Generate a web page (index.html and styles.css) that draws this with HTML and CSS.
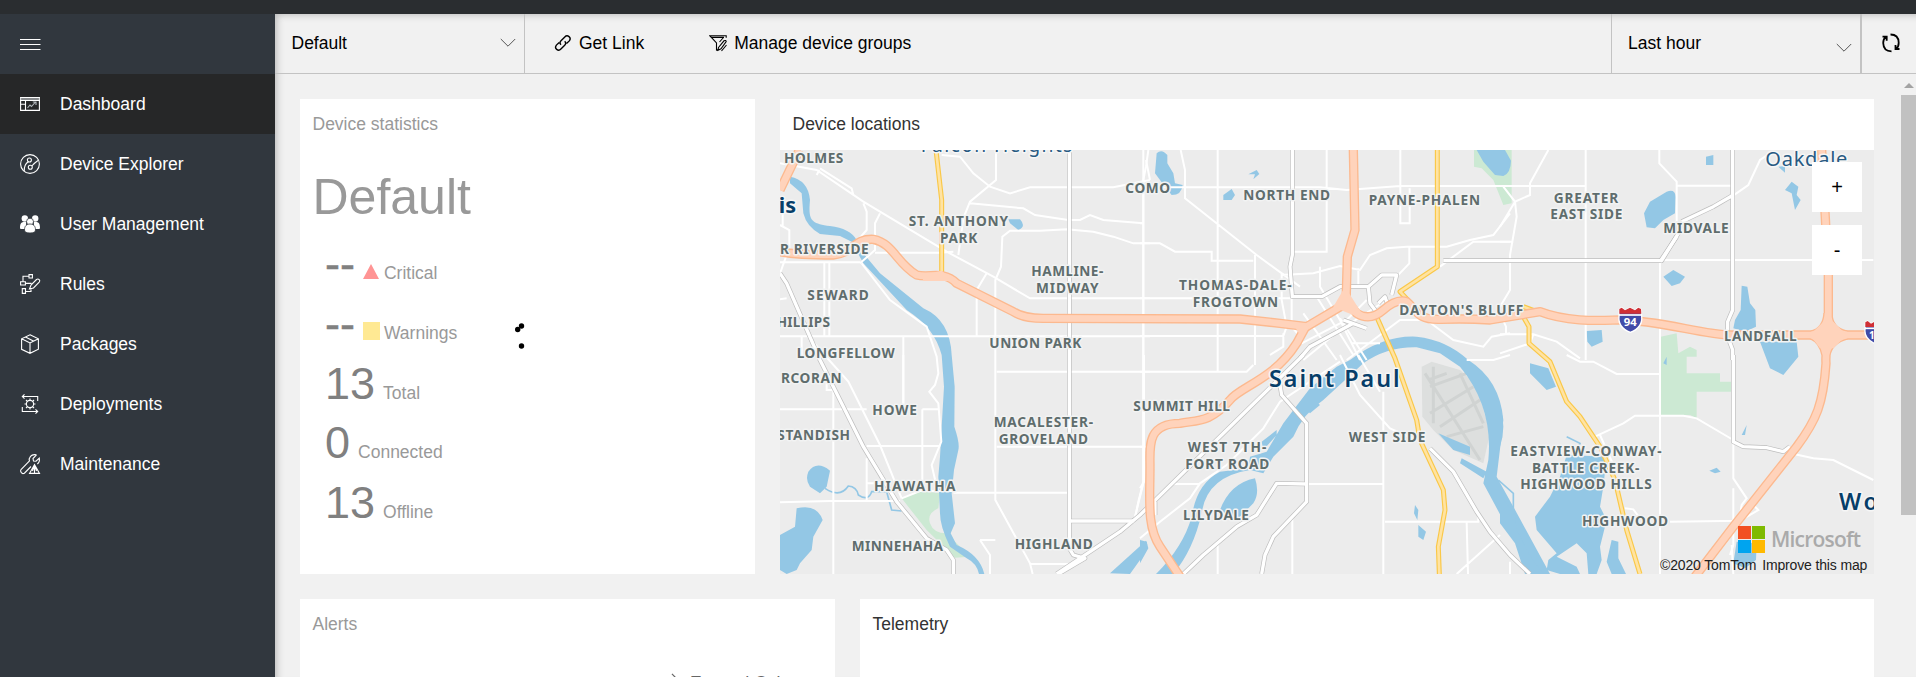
FILE: index.html
```html
<!DOCTYPE html>
<html lang="en">
<head>
<meta charset="utf-8">
<title>Dashboard</title>
<link rel="stylesheet" href="styles.css">
</head>
<body>
<div class="topbar"></div>
<div class="app">
  <nav class="sidebar">
    <div class="nav-item"><svg class="icon" viewBox="0 0 20 20"><path d="M0 5.5h20.5M0 10.5h20.5M0 15.5h20.5"/></svg></div>
    <a class="nav-item active"><svg class="icon" viewBox="0 0 20 20"><path d="M.6 3.6h18.8v12.8H.6zM0 6.4h20M5.5 6.4v10M0 10.3h5.5"/><path class="soft" d="M0 5h20M7.5 14l2.5-3 1.5 1.5 4-4.5M12.8 8H16v3"/></svg><span>Dashboard</span></a>
    <a class="nav-item"><svg class="icon" viewBox="0 0 20 20"><circle cx="10" cy="10" r="9.4"/><circle cx="9.4" cy="6" r="2"/><circle cx="10.3" cy="13.3" r="2"/><path d="M8.300 7.800C5.500 9.500 4.200 12 4.200 17M11.800 12C14 9.500 15 8.500 18 6.500"/></svg><span>Device Explorer</span></a>
    <a class="nav-item"><svg class="icon solid" viewBox="0 0 20 20"><circle cx="4.800" cy="4.500" r="3.200"/><circle cx="15.200" cy="4.500" r="3.200"/><path d="M0 14c0-4 1-6 4-6h2v7H1Q0 15 0 14zM20 14c0-4-1-6-4-6h-2v7h5q1 0 1-1z"/><g class="cut"><circle cx="10" cy="7.700" r="3.500"/><path d="M4.500 16c0-4 2-6 5.500-6s5.500 2 5.500 6q0 3-5.500 3t-5.500-3z"/></g></svg><span>User Management</span></a>
    <a class="nav-item"><svg class="icon" viewBox="0 0 20 20"><path d="M9 .6h3.400V4H9zM.6 7.800h4.800v3.200H.6zM2.300 14.600h3.200v4.800H2.300zM3 7.500V2.300h6M5.500 9.400h6M5.500 17.500H11v-2M9.500 15l1.500-4 5.500-5.500q1.500-1 2.700.2t0 2.500L13.500 14z"/></svg><span>Rules</span></a>
    <a class="nav-item"><svg class="icon" viewBox="0 0 20 20"><path d="M10 .8l8.400 4v10.400L10 19.300l-8.400-4V4.800zM1.600 4.800L10 9l8.400-4.200M10 9v10M5.500 3l8.300 4.200"/></svg><span>Packages</span></a>
    <a class="nav-item"><svg class="icon" viewBox="0 0 20 20"><circle cx="10" cy="10" r="3.600"/><path d="M10 4.500v2M10 13.500v2M4.500 10h2M13.500 10h2M6 6l1.500 1.500M14 6l-1.500 1.500M6 14l1.500-1.500M14 14l-1.500-1.500M4.500.3L2.300 2.500l2.200 2.200M2.500 2.500h15.200V7M15.500 15.300l2.200 2.200-2.200 2.200M17.500 17.500H2.300V13"/></svg><span>Deployments</span></a>
    <a class="nav-item"><svg class="icon" viewBox="0 0 20 20"><path d="M16.500.9q-4-1-6 1.500t-1 4.600L1 15.500q-1 1.300.2 3t3.200.7L11 12.500M16.500.9L13 4.500l.5 2.500 2.500.2L19.300 4q.8 4-2 6M9.500 19.400l5-8.900 5 8.900zM14.500 11v8M12.500 17l1.500-4.500M16.500 17L15 12.500"/></svg><span>Maintenance</span></a>
  </nav>
  <main class="main">
    <header class="toolbar">
      <div class="select group-select"><span>Default</span><svg class="chev" viewBox="0 0 16 10"><path d="M.8 1L8 8.200 15.200 1"/></svg></div>
      <button class="tool link"><svg class="glyph" viewBox="0 0 18 18"><path d="M7 10.800q-2-2 0-4l3.800-3.900q2-2 4.200-.3t.3 4.300L12.500 9.500M10.700 7.200q2 2 0 4l-3.800 3.900q-2 2-4.200.3t-.3-4.300L5.200 8.500"/></svg><span>Get Link</span></button>
      <button class="tool groups"><svg class="glyph thin" viewBox="0 0 18 18"><path d="M7.500 16.500V9L.8 1.700h16.400v2M2 3.400h13M10.500 8l4-4.500M7.500 16.500l2-1.200M9.500 13.500L15 6.800q2-1 2.200.8L12 14.800l-3 1.500zM12.500 17l5-6"/></svg><span>Manage device groups</span></button>
      <div class="select time-select"><span>Last hour</span><svg class="chev low" viewBox="0 0 16 10"><path d="M.8 1L8 8.200 15.200 1"/></svg></div>
      <button class="refresh"><svg viewBox="0 0 20 20"><path d="M9.500 1.500q8 0 8.200 8.200 0 4-2.500 6M18.500 16h-4v-4M10.500 18.300q-8 0-8.300-8.300 0-4 2.600-6M1.500 3.600h4.200v4.200"/></svg></button>
    </header>
    <div class="content">
      <div class="row first">
        <section class="card stats">
          <h2 class="muted">Device statistics</h2>
          <div class="group-name">Default</div>
          <div class="stat"><b class="empty">--</b><svg class="tri" viewBox="0 0 16 15"><path d="M8 0l8 15H0z"/></svg><span>Critical</span></div>
          <div class="stat"><b class="empty">--</b><i class="square"></i><span>Warnings</span></div>
          <div class="stat num"><b>13</b><span>Total</span></div>
          <div class="stat num"><b>0</b><span>Connected</span></div>
          <div class="stat num"><b>13</b><span>Offline</span></div>
          <svg class="spinner" viewBox="0 0 12 28"><circle cx="8.500" cy="4" r="2.700"/><circle cx="4.700" cy="7.500" r="2.700"/><circle cx="8.500" cy="24" r="2.700"/></svg>
        </section>
        <section class="card locations">
          <h2>Device locations</h2>
          <div class="map">
            <svg class="map-art" viewBox="0 30 3282 1272" preserveAspectRatio="none">
              <defs>
                <g id="streets">
                  <g>
                    <path d="M0 70L110 90 250 185 500 335 640 410 750 475H1110M120 85L215 145 220 165M110 105L118 90M250 190L260 215V270L225 310M300 220L285 250V330L240 370M0 367H240M0 255L28 270V330M133 367V590M148 367V590M0 589H1110M8 210V260M65 592V645M18 350L0 400M0 478L20 475M370 592V800M285 338H480L520 335"/>
                    <path d="M485 45L540 50 580 100 630 140 690 160 750 142H1000L1110 120M648 30V120L570 185 550 235 535 345M570 190L730 205 765 225 865 240 900 240 930 225 970 240 1090 250M1110 310H1060L1000 290 940 275 860 268 780 272H690L667 290 663 380 646 420V1080L750 1270 758 1302M620 400L590 450V589M1090 30V1030L1060 1150M1098 60L1110 120M245 370L330 480 440 560 470 650 475 700 465 735 448 755 475 790 484 905 455 975 470 1040"/>
                  </g>
                  <g transform="translate(1080 0)">
                    <path d="M25 30L18 80 10 120V645M122 30L135 90V175L350 345 480 440M233 30V645M0 142H540L620 150 780 138H1110M560 30V335H460M0 310H60L105 335H215V362H340M345 345V645M0 475H450M0 588H430L440 560 425 480V405L520 400 600 378 660 390 690 345 740 325 800 320H920L990 300 1060 285 1110 220M540 380V440L600 540 660 660M455 470V560L480 590M781 30V250H809V145M808 320V370L770 410M900 380L1000 305H1110M655 385V440M530 470L640 645M490 520L590 660M0 250L12 250M430 580V620L390 645"/>
                    <path d="M485 610L620 540 680 480M490 660L600 570 740 480M600 535L680 660M620 660L780 540 860 540 940 600 1030 620 1055 590 1110 580M635 610H720"/>
                  </g>
                  <g transform="translate(2160 0)">
                    <path d="M257 30V660M0 138H257M145 30L90 130V165L45 185 10 140M45 185L0 260M45 185L50 230 30 345V450L0 500M0 305H40M478 30V70L530 125V290M530 137H700M810 40L780 60 745 135 695 170M480 360H1120M480 360V1302M0 583H100L170 605 240 655M100 583L90 610 0 640M0 520L18 560V583"/>
                  </g>
                  <g transform="translate(0 645)">
                    <path d="M160 100V657M0 163H260M0 442L150 438H360M140 80V105H158M80 -60L205 80 300 270 365 430M370 0V150M260 273H480M260 310V435M427 163V400M427 163H475M260 385H300M520 413H865M650 50H1110M650 275H1090M750 627H865M600 555H646M600 555L630 600V657M1090 0V380L1075 440 1065 490M365 430L420 408H520"/>
                  </g>
                  <g transform="translate(1080 645)">
                    <path d="M0 50H320L340 30M345 0V30M233 0V50M12 0V380L0 400M0 275H40M100 387H180M0 550L60 500 150 430 180 385 260 330 370 220 420 140 600 20M500 387H730M730 110V657M655 0L720 110M600 0L660 120 750 220 840 260M735 500H1015V470M980 503L984 657M457 490V657M233 560V657M950 657L1080 540M980 15H1060L1110 0"/>
                  </g>
                  <g transform="translate(2160 645)">
                    <path d="M200 0L240 20 280 20 350 57H480M285 245L370 205 405 182H550L590 190 700 255M700 260V370L740 430 725 450 720 480M700 400V570L690 600M850 290L940 310 1000 315 1120 375M510 500L720 497 775 465 745 435M375 460L400 463 420 490M30 620V657M695 570L700 657M300 240L340 330"/>
                  </g>
                </g>
                <g id="roads">
                  <path d="M868 30V1225L880 1245 915 1255 835 1302M868 1143H1060M0 400L20 430 120 660 250 920 350 1085 440 1195 500 1230 520 1260V1302"/>
                  <g transform="translate(1080 0)"><path d="M457 30V345L450 380 457 470H545L600 440H685L725 405H770L755 465M685 440L690 490 720 530M715 490L735 470 745 500M910 362H1565L1615 280 1615 245M480 655L510 620 640 550M610 540L680 565"/></g>
                  <g transform="translate(2160 0)"><path d="M698 30V510L683 545V590L698 630V660M545 245L640 200 700 165M480 365L530 290"/></g>
                  <g transform="translate(1080 645)"><path d="M490 0L0 480-60 530-250 657M420 90L425 120 500 205V440L400 545 375 600 365 657M130 657L190 600 290 515 350 480 410 385 500 387M45 440V480M870 280L940 350 1010 470 1050 530 1110 600 1170 657"/></g>
                  <g transform="translate(2160 645)"><path d="M700 0V260L730 275 800 278 850 290 870 275"/></g>
                </g>
                <g id="yellow">
                  <path d="M468 30L485 180V400"/>
                  <g transform="translate(1080 0)"><path d="M892 30V380L780 455 860 540M712 535L765 655 830 840 840 900 910 1050 915 1110 895 1220 898 1302"/></g>
                  <g transform="translate(2160 0)"><path d="M70 500L110 515M70 530L87 560V610L150 665 200 785 240 830 300 920 345 1020 380 1170 420 1302"/></g>
                </g>
                <g id="highway">
                  <path d="M58 30L0 150M0 335Q50 345 160 345C220 340 220 295 280 298C340 310 350 370 410 405C450 415 490 390 530 430L700 515Q730 535 790 535L1380 537 1500 550 1580 560 1690 495"/>
                  <g transform="translate(1080 0)"><path d="M640 30L645 270 622 350 618 495M600 495Q630 490 650 520 690 545 730 510T800 485C830 510 830 540 900 538Q980 535 1050 540L1200 515C1290 550 1400 540 1440 540 1560 540 1700 588 1780 585H2210M500 555L470 610C400 720 300 740 270 780 210 850 170 840 120 850 20 850 30 920 30 980 30 1080 20 1160 60 1220L120 1310"/></g>
                  <g transform="translate(2160 0)"><path d="M965 30L985 400V560C985 610 975 630 978 670 970 790 950 840 890 920L700 1160 585 1310M935 585Q980 575 984 520M984 520Q985 575 1040 585M935 585Q970 600 978 645M1040 585Q985 600 978 645"/></g>
                </g>
              </defs>
              <path class="park" d="M365 1075L420 1053 480 1060 475 1105Q440 1120 450 1150T500 1180L570 1250 525 1253 440 1170z"/>
              <g transform="translate(2160 0)"><path class="park" d="M-78 30V80L-55 85-20 120 10 195 35 190V30zM482 590L530 580 535 640 570 620 590 630V650H560V700H660V725H693V755H590V835L570 825H482z"/></g>
              <path class="airport" d="M1925 680L1955 665 2040 690Q2080 720 2100 770L2130 880 2110 970 2020 930 1960 870 1927 830z"/>
              <path class="runway" d="M1935 700L2100 960M1950 740L2060 700M1950 820L2080 740M1960 680V850M1980 860L2100 780M2040 700L2110 850M1945 720L2000 700M2000 890L2110 860"/>
              <g class="water">
                <path d="M30 110Q85 120 90 180C85 240 90 250 150 258Q210 265 230 300L250 340 300 400 430 505Q510 540 515 645L524 740 523 860Q540 910 535 930L522 990 515 1060 525 1150 512 1180 530 1215Q600 1245 613 1302H597Q590 1270 560 1255L510 1220Q480 1160 480 1120L475 1010 480 950 485 860 492 740 485 645C470 590 440 550 380 510L250 370 215 305 180 288 120 282Q80 260 70 220L65 160 30 130zM685 238L720 238Q740 260 715 270L690 250z"/>
                <path d="M85 995Q110 960 150 992L140 1040 120 1060 90 1040Q75 1020 85 995zM50 1105Q110 1090 128 1140L100 1190 95 1230 60 1270 50 1290 20 1302 0 1290V1185L45 1160zM990 1300L1098 1202Q1110 1220 1080 1260L1050 1302z"/>
                <g transform="translate(1080 0)">
                  <path d="M50 40Q65 25 82 45V70L100 100 105 130 128 135Q125 165 95 165L75 140 45 100zM250 165L275 147 285 165 275 180H250zM325 103L350 90 358 102 340 118 345 103zM1010 30H1095L1113 62Q1112 100 1090 108L1065 105 1030 65z"/>
                  <path d="M630 660Q730 585 830 590 920 600 985 660 1080 720 1090 840 1080 930 1070 1010L1120 1100 1230 1302H1195L1100 1160 1030 1030 1045 960Q1060 800 960 680L900 640 830 622Q740 620 670 670L550 780Q490 820 460 890L400 950 370 1000 330 990Q200 1010 185 1120 160 1230 100 1302H48Q130 1220 155 1130 170 1030 240 995L325 985 330 950 380 935 430 850 510 745 590 680zM240 1110Q270 1030 345 1015 360 1060 340 1090L290 1140zM500 810L530 785 540 795 510 820zM0 1200L20 1205 25 1225 0 1270zM365 905L410 870V885L370 930zM825 1095L835 1110 832 1140 822 1120zM835 1155L858 1175 850 1200 835 1190zM895 880L930 895 990 920 990 945 940 930zM965 955L1040 995 1030 1015 960 970z"/>
                </g>
                <g transform="translate(2160 0)">
                  <path d="M618 50L640 45 640 75 618 75zM500 155Q525 145 527 170L525 220 490 240 465 265 440 262 432 220 450 185zM490 410L520 390 555 410 540 430 515 438zM855 150L875 125 895 140 890 165 902 180 885 210 875 160zM835 80L855 78 855 98zM725 437L742 440 750 490 766 510 768 560 735 575 700 565 705 540 722 510zM780 605H890L895 650 850 705 810 685zM260 573L305 570 308 605 275 620 262 605zM490 670L500 650V675z"/>
                  <path d="M90 670L145 685 168 740 140 750 90 700zM200 945L320 950 310 1040 300 1100 320 1140 300 1220 305 1260 290 1302H265L260 1240 230 1210 170 1250 230 1280 240 1302H180L140 1290 145 1260 170 1240 110 1170 105 1130 150 1070 180 1010zM0 1065L45 1125 50 1170 85 1240 130 1302H75L45 1210 0 1150zM335 1200L355 1205V1255L378 1302H335L320 1265zM628 992L650 983 662 995 645 1000zM725 885L740 855 735 885zM710 1205L770 1210 768 1260 735 1285 700 1270zM0 800Q20 860 0 920z"/>
                </g>
              </g>
              <path class="creek" d="M135 1045Q180 1075 205 1038 230 1040 235 1065 265 1085 275 1055L320 1055 335 1110 365 1113"/>
              <path class="creek" d="M2155 1020L2200 1060V1110M2360 890L2400 910 2380 960"/>
              <use href="#streets" class="street"/>
              <use href="#roads" class="road-case"/><use href="#roads" class="road"/>
              <use href="#yellow" class="yellow-case"/><use href="#yellow" class="yellow-road"/>
              <use href="#highway" class="hw-case"/><use href="#highway" class="hw"/>
              <path class="junction" d="M1660 500L1695 440 1720 480 1745 520 1720 525 1695 515zM1535 545L1590 560 1560 585zM3090 585L3130 545H3160L3200 585 3160 625H3120zM425 405L485 392 530 430 510 423H430z"/>
              <g class="shield" transform="translate(2515 503)"><path d="M3 5L10 0 20 8 35 0 50 8 60 0 68 5 70 25Q74 60 36 74-2 60 2 25z" fill="#414ba8" stroke="#fff" stroke-width="4"/><path d="M3 4L10 0 20 8 35 0 50 8 60 0 68 4 69 18H3z" fill="#cf2f35"/><path d="M2 22h68" stroke="#fff" stroke-width="5"/><text x="36" y="54" font-size="34" text-anchor="middle">94</text></g>
              <g class="shield" transform="translate(3253 543)"><path d="M3 5L10 0 20 8 35 0 50 8V74Q-2 60 2 25z" fill="#414ba8" stroke="#fff" stroke-width="4"/><path d="M3 4L10 0 20 8 35 0V18H3z" fill="#cf2f35"/><path d="M2 22h68" stroke="#fff" stroke-width="5"/><text x="14" y="54" font-size="30">1</text></g>
              <g class="places">
                <text x="12" y="70" textLength="178">HOLMES</text>
                <text x="0" y="342" textLength="266">R RIVERSIDE</text>
                <text x="386" y="258" textLength="298">ST. ANTHONY</text><text x="480" y="308" textLength="112">PARK</text>
                <text x="754" y="409" textLength="216">HAMLINE-</text><text x="768" y="459" textLength="188">MIDWAY</text>
                <text x="82" y="481" textLength="184">SEWARD</text><text x="-10" y="560" textLength="160">HILLIPS</text>
                <text x="50" y="653" textLength="294">LONGFELLOW</text><text x="628" y="624" textLength="276">UNION PARK</text>
                <text x="1036" y="160" textLength="134">COMO</text><text x="1390" y="180" textLength="260">NORTH END</text>
                <text x="1766" y="194" textLength="334">PAYNE-PHALEN</text>
                <text x="1197" y="451" textLength="338">THOMAS-DALE-</text><text x="1238" y="501" textLength="256">FROGTOWN</text>
                <text x="1858" y="525" textLength="372">DAYTON'S BLUFF</text>
                <text x="2321" y="188" textLength="194">GREATER</text><text x="2311" y="237" textLength="216">EAST SIDE</text>
                <text x="2650" y="279" textLength="196">MIDVALE</text><text x="2832" y="603" textLength="218">LANDFALL</text>
                <text x="3" y="728" textLength="182">RCORAN</text><text x="277" y="825" textLength="134">HOWE</text>
                <text x="-8" y="901" textLength="218">STANDISH</text><text x="282" y="1053" textLength="244">HIAWATHA</text>
                <text x="215" y="1232" textLength="274">MINNEHAHA</text><text x="704" y="1228" textLength="234">HIGHLAND</text>
                <text x="641" y="862" textLength="298">MACALESTER-</text><text x="656" y="911" textLength="268">GROVELAND</text>
                <text x="1060" y="814" textLength="290">SUMMIT HILL</text>
                <text x="1223" y="937" textLength="236">WEST 7TH-</text><text x="1216" y="986" textLength="252">FORT ROAD</text>
                <text x="1706" y="907" textLength="230">WEST SIDE</text><text x="1209" y="1141" textLength="198">LILYDALE</text>
                <text x="2191" y="949" textLength="454">EASTVIEW-CONWAY-</text><text x="2256" y="998" textLength="322">BATTLE CREEK-</text><text x="2221" y="1047" textLength="394">HIGHWOOD HILLS</text>
                <text x="2406" y="1159" textLength="258">HIGHWOOD</text>
              </g>
              <g class="cities">
                <text x="-4" y="218" textLength="52" font-size="65">is</text>
                <text class="metro" x="1467" y="740" textLength="392" font-size="70">Saint Paul</text>
                <text class="metro" x="3177" y="1110" font-size="70" letter-spacing="8">Wo</text>
                <text class="town" x="422" y="35" textLength="455" font-size="58">Falcon Heights</text>
                <text class="town" x="2956" y="79" textLength="246" font-size="60">Oakdale</text>
              </g>
            </svg>
            <div class="map-zoom"><button>+</button><button>-</button></div>
            <div class="map-brand"><i class="ms"><b></b><b></b><b></b><b></b></i><span>Microsoft</span></div>
            <div class="map-credit"><span>©2020 TomTom</span><span>Improve this map</span></div>
          </div>
        </section>
      </div>
      <div class="row second">
        <section class="card alerts"><h2 class="muted">Alerts</h2><div class="expand"><svg viewBox="0 0 16 16"><path d="M1 1l14 14M15 10v5h-5"/></svg><span>Expand Columns</span></div></section>
        <section class="card telemetry"><h2>Telemetry</h2></section>
      </div>
      <div class="scrollbar"><i class="up"></i><i class="thumb"></i></div>
    </div>
  </main>
</div>
</body>
</html>
```
FILE: styles.css
```css
* { box-sizing: border-box; }
body { margin: 0; height: 677px; overflow: hidden; font: 17.5px/20px "Liberation Sans", Arial, sans-serif; color: #000; background: #f1f1f1; }
button { font: inherit; color: inherit; border: 0; padding: 0; background: none; }
.topbar { height: 14px; background: #2a2d30; }
.app { display: flex; height: 663px; }
.sidebar { width: 275px; flex: none; background: #31373e; color: #fff; }
.nav-item { display: flex; align-items: center; gap: 20px; height: 60px; padding-left: 20px; }
.nav-item.active { background: #262728; }
.icon { width: 20px; height: 20px; overflow: visible; fill: none; stroke: #fff; stroke-width: 1.1; }
.icon .soft { stroke: #b4b9bd; }
.icon.solid { fill: #fff; stroke: none; }
.icon .cut { stroke: #31373e; stroke-width: .8; }
.main { flex: 1; min-width: 0; display: flex; flex-direction: column; box-shadow: inset 5px 4px 7px -3px #bbb; }
.toolbar { height: 60px; flex: none; display: flex; border-bottom: 1px solid #c3c3c3; }
.select { display: flex; align-items: center; justify-content: space-between; padding-bottom: 1px; }
.group-select { width: 250px; padding-left: 16.5px; padding-right: 8px; border-right: 1px solid #c3c3c3; }
.time-select { width: 250px; margin-left: auto; padding-left: 16px; padding-right: 8px; border-left: 1px solid #c3c3c3; border-right: 1px solid #c3c3c3; }
.chev { width: 16px; height: 10px; fill: none; stroke: #555; stroke-width: 1; }
.chev.low { margin-top: 10px; }
.tool { display: flex; align-items: center; gap: 7px; padding-bottom: 1px; }
.link { margin-left: 29px; }
.groups { margin-left: 65px; }
.glyph { width: 18px; height: 18px; fill: none; stroke: #000; stroke-width: 1.4; }
.glyph.thin { stroke-width: 1.1; }
.refresh { width: 55px; display: flex; align-items: center; justify-content: center; padding-left: 3px; padding-bottom: 2px; border-left: 1px solid #c3c3c3; }
.refresh svg { width: 20px; height: 20px; fill: none; stroke: #000; stroke-width: 1.8; }
.content { position: relative; flex: 1; padding: 25px 42px 0 25px; display: flex; flex-direction: column; gap: 25px; overflow: hidden; }
.row { display: flex; gap: 25px; flex: none; }
.first { height: 475px; }
.second { height: 300px; }
.card { position: relative; background: #fff; overflow: hidden; }
.card h2 { margin: 0; height: 51px; padding: 15px 12.5px 0; font-size: 17.5px; font-weight: 400; color: #333; }
.card h2.muted { color: #999; }
.stats { width: 455px; }
.locations { flex: 1; }
.alerts { width: 535px; }
.telemetry { flex: 1; }
.group-name { font-size: 50px; line-height: 56px; color: #999; padding: 19px 0 0 12.5px; height: 89px; }
.stat { display: flex; align-items: baseline; height: 60px; padding-left: 25px; color: #999; line-height: 50px; }
.stat b { font-weight: 400; font-size: 45px; color: #808080; margin-right: 8px; }
.stat .empty { -webkit-text-stroke: .5px #808080; }
.stat.num { margin-top: -.5px; }
.tri { width: 16px; height: 15px; fill: #ff9494; margin-right: 5px; }
.square { width: 17px; height: 18px; background: #ffe993; margin: 23px 4px 0 0; align-self: flex-start; }
.spinner { position: absolute; left: 213px; top: 223px; width: 12px; height: 28px; }
.map { position: relative; height: 424px; background: #ececec; overflow: hidden; }
.map-art { display: block; width: 1094px; height: 424px; }
.park { fill: #cce9d3; }
.airport { fill: #dddfde; }
.runway { fill: none; stroke: #d0d3d2; stroke-width: 9; }
.water { fill: #93c7e5; }
.creek { fill: none; stroke: #93c7e5; stroke-width: 5; }
.street { fill: none; stroke: #fff; stroke-width: 6; }
.road-case, .road, .yellow-case, .yellow-road, .hw-case, .hw { fill: none; stroke-linejoin: round; }
.road-case { stroke: #bdbdbd; stroke-width: 14; }
.road { stroke: #fff; stroke-width: 10; }
.yellow-case { stroke: #fac848; stroke-width: 15; }
.yellow-road { stroke: #ffe3a2; stroke-width: 8; }
.hw-case { stroke: #fcb98f; stroke-width: 28; }
.hw { stroke: #ffd3bb; stroke-width: 20; }
.junction { fill: #ffd3bb; }
.shield text { fill: #fff; font-family: "Noto Sans", sans-serif; font-weight: 700; }
.places text { font: 700 41px "Noto Sans", sans-serif; fill: #5f6d6d; stroke: #f2f3f3; stroke-width: 9; paint-order: stroke; stroke-linejoin: round; }
.cities text { font-family: "Noto Sans", sans-serif; font-weight: 700; fill: #073e69; stroke: #f6f6f6; stroke-width: 9; paint-order: stroke; stroke-linejoin: round; }
.cities .metro { font-weight: 600; }
.cities .town { font-weight: 400; fill: #285a82; }
.map-zoom { position: absolute; right: 12px; top: 12px; display: grid; gap: 13px; }
.map-zoom button { width: 50px; height: 50px; background: #fff; font-size: 20px; }
.map-brand { position: absolute; left: 958px; top: 376px; display: flex; align-items: center; gap: 6px; height: 27px; }
.map-brand span { font: 600 21px/27px "Open Sans", sans-serif; color: #aaa; letter-spacing: -.8px; }
.ms { display: grid; grid-template-columns: 13px 13px; grid-auto-rows: 13px; gap: 1px; }
.ms b:nth-child(1) { background: #f25022; }
.ms b:nth-child(2) { background: #7fba00; }
.ms b:nth-child(3) { background: #00a4ef; }
.ms b:nth-child(4) { background: #ffb900; }
.map-credit { position: absolute; left: 880px; bottom: -1px; display: flex; gap: 6px; font-size: 14px; letter-spacing: -.15px; color: #222; white-space: nowrap; }
.expand { position: absolute; left: 371px; top: 73.5px; display: flex; align-items: center; gap: 4px; color: #666; }
.expand svg { width: 15px; height: 15px; margin-top: -4px; fill: none; stroke: #666; stroke-width: 1.3; }
.scrollbar { position: absolute; right: 0; top: 0; width: 15px; height: 100%; }
.up { position: absolute; left: 3px; top: 9px; border: 5px solid transparent; border-top: 0; border-bottom-color: #a3a3a3; }
.thumb { position: absolute; left: 0; top: 21px; width: 15px; height: 420px; background: #c1c1c1; }
```
